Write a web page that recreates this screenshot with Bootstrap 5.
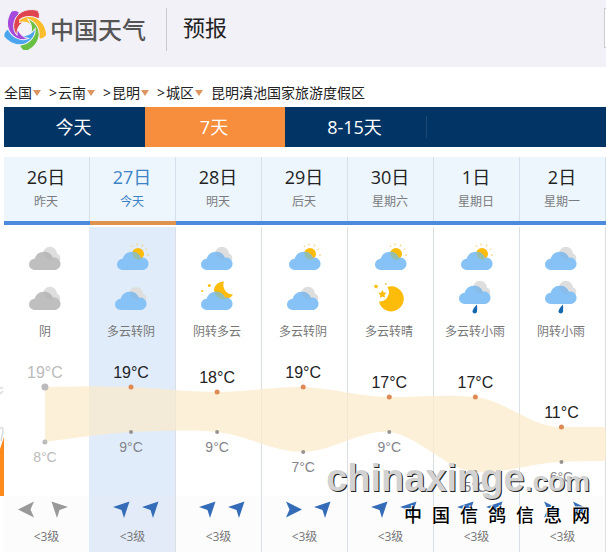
<!DOCTYPE html>
<html lang="zh-CN">
<head>
<meta charset="utf-8">
<meta name="viewport" content="width=device-width, initial-scale=1">
<title>预报 - 中国天气</title>
<link href="https://cdn.jsdelivr.net/npm/bootstrap@5.3.0/dist/css/bootstrap.min.css" rel="stylesheet">
<style>
body{font-family:"Open Sans","Noto Sans CJK SC",sans-serif;color:#222;background:#fff;overflow-x:hidden}
a{color:inherit;text-decoration:none}
.site-head{height:67px;background:#f2f1f8;padding:8px 0 0 4px}
.brand-name{font-size:24px;line-height:42px;font-weight:500;color:#555;font-family:"Noto Sans CJK SC",sans-serif;padding-right:4px}
.head-rule{width:1px;height:43px;background:#c9c9cf}
.head-title{font-size:22px;line-height:38px}
.search-edge{width:2px;height:40px;border:1px solid #ccc;border-right:0;background:#fff}
.crumbs{font-size:14px;line-height:20px;padding:16px 0 4px 4px}
.crumbs .tri{width:0;height:0;border:4px solid transparent;border-top:6px solid #dd9560;border-bottom:0;margin-left:1px}
.crumbs .sep{margin-left:8px;width:9px}
.tabs-bar{background:#023466;margin-left:4px;height:40px;color:#fff;font-size:18px;line-height:40px}
.tabs-bar a{width:141px;text-align:center;padding-right:2px}
.tabs-bar .on{background:#f68e3d;width:140px}
.tab-rule{width:1px;height:22px;background:#1d4874}
.days{margin:10px 0 2px 4px}
.day{--bar:#4b8adc;flex:1 1 0;min-width:0;background:linear-gradient(var(--bar),var(--bar)) bottom/100% 4px no-repeat,linear-gradient(#d5e0ec,#d5e0ec) right/1px 100% no-repeat #edf6fd;height:68px;padding:8px 2px 0 0;text-align:center}
.day strong{font-size:18px;line-height:24px;font-weight:400;display:block}
.day small{font-size:12px;line-height:26px;color:#7c7c80;display:block}
.day.now,.day.now small{color:#3f83c6}
.day.now{--bar:#e0924f}
.cols{margin-left:4px}
.col-day{flex:1 1 0;min-width:0;border-right:1px solid #dadfe6;text-align:center;font-size:12px;line-height:24px;color:#777}
.col-day.first{border-right-color:#e0ecfa}
.col-day.now{background:#e0ecfa}
.sky{padding:12px 3px 0 0}
.sky svg{width:40px;height:40px;display:block;margin:0 auto}
.sky span{display:block;line-height:26px;height:24px}
.chart-room{height:153px}
.wind{height:56px;background:#fcfcfc;padding:5px 0 0}
.now .wind{background:#e2ebf7}
.arrows{height:18px;gap:12px;padding-left:6px}
.first .arrows{gap:16px;padding-left:8px}
.arrows svg{width:17px;height:17px;fill:#356cb8}
.first .arrows svg{fill:#999}
.force{padding:6px 0 0}
.chart{position:absolute;left:0;top:116px;width:100%;height:153px;font-family:"Liberation Sans",sans-serif}
.hi{font-size:16px;fill:#222;text-anchor:middle}
.lo{font-size:14px;fill:#84848a;text-anchor:middle}
.hi .old,.lo .old{fill:#bbb}
.side-ad{position:absolute;left:0;top:385px;width:4px;height:111px}
.stamp{position:absolute;right:16px;top:458px;font-family:"Liberation Sans","Noto Sans CJK SC",sans-serif;font-weight:700;color:#d2d2d2;text-shadow:1px 1px 0 #222}
.stamp-url{font-size:38px;line-height:40px}
.stamp-url span{font-size:28px}
.stamp-cn{font-size:18px;line-height:22px;gap:10px;margin-top:3px;color:#000;font-weight:500;text-shadow:-1px -1px 0 #fff}
</style>
<script src="https://cdn.jsdelivr.net/npm/bootstrap@5.3.0/dist/js/bootstrap.bundle.min.js"></script>
</head>
<body class="position-relative">
<svg class="d-none" aria-hidden="true">
  <symbol id="front" viewBox="0 0 32 22"><path d="M5.600 22A5.600 5.600 0 0 1 5.600 10.800A9.800 9.800 0 0 1 24 9.700A6.200 6.200 0 1 1 26.500 22Z"/></symbol>
  <symbol id="overcast" viewBox="0 0 40 40"><path d="M18 15A6.800 6.800 0 0 1 32 14.500A5 5 0 0 1 35 21L24 24Z" fill="#dedede"/><use href="#front" x="4" y="9" width="32" height="22"/><path d="M18.500 12.500A9.500 9.500 0 0 1 27.300 18.500A6 6 0 0 1 29 18.600L26 21Q19 19 18.500 12.500Z" fill="#999" opacity=".15"/></symbol>
  <symbol id="sunny" viewBox="0 0 40 40"><circle cx="27" cy="15" r="6" fill="#fdbb0a"/><path d="M21 6.500l1 1.500M26 4.500v2M32 5.500l-1 2M36 9.500l-1.500 1.500M38 16H36" stroke="#f5ce6a" stroke-width="1"/><use href="#front" x="6" y="9" width="32" height="22"/><path d="M22 12.400A9.500 9.500 0 0 1 29.500 18.800A6 6 0 0 1 31 19.300A6 6 0 0 1 21.500 14Z" fill="#a6ba62" opacity=".5"/></symbol>
  <symbol id="mooncloud" viewBox="0 0 40 40"><path d="M27 2.500A9.700 9.700 0 0 0 16.700 12L28 19.500Q33 20.500 36 15.500A9.500 9.500 0 0 1 27 2.500Z" fill="#fdbb0a"/><circle cx="12.300" cy="6.500" r="1.500" fill="#fdbb0a"/><circle cx="5.200" cy="12" r="1" fill="#fdbb0a"/><use href="#front" x="4" y="9" width="32" height="22"/><path d="M17.500 12A9.500 9.500 0 0 1 27 18.500L31 19A9 9 0 0 1 17.500 12Z" fill="#a6ba62" opacity=".5"/></symbol>
  <symbol id="moon" viewBox="0 0 40 40"><path d="M18.300 8A12.500 12.500 0 1 1 10 22.500A9.300 9.300 0 0 0 18.300 8Z" fill="#fdbb0a"/><path d="M13.500 11l1.200 2.500 2.800.2-2 2.200.6 2.800-2.600-1.200-2.600 1.200.4-2.800-2-2 2.800-.4Z" fill="#fdbb0a"/><path d="M7 5l.8 1.500 1.600.2-1.100 1.200.3 1.600L7 8.800l-1.500.7.3-1.600-1.200-1.200 1.600-.2Z" fill="#fdbb0a"/><circle cx="16.800" cy="5" r="1" fill="#f2ca60"/></symbol>
  <symbol id="rain" viewBox="0 0 40 40"><use href="#overcast" y="-6" width="40" height="40"/><path d="M22 25.500Q17.500 30 17.500 32.800A2.300 2.300 0 0 0 22 32.800Q22.400 29 22 25.500Z" fill="#1468ae"/></symbol>
  <symbol id="w" viewBox="0 0 17 17"><path d="M0 8.500L16 0.500L12.500 8.500L16 16.500Z"/></symbol>
  <symbol id="ne" viewBox="0 0 17 17"><path d="M0 6L16.500 .5L11 17L8.500 9Z"/></symbol>
  <symbol id="nw" viewBox="0 0 17 17"><path d="M.5 .5L17 6L8.500 9L6 17Z"/></symbol>
  <symbol id="e" viewBox="0 0 17 17"><path d="M1 .5L17 8.500L1 16.500L4.500 8.500Z"/></symbol>
</svg>

<header class="site-head d-flex align-items-start">
  <a href="#" class="d-flex" aria-label="中国天气">
    <svg width="42" height="42" viewBox="-63 -63 126 126">
      <defs>
        <path id="blade" d="M43-32Q46-46 38-56C2-65-30-48-34-14C-35-2-32 10-24 19C-26-12-4-34 43-32Z"/>
        <clipPath id="tail"><path d="M-60-44H-18V30H-60Z"/></clipPath>
      </defs>
      <g stroke="#f2f1f8" stroke-width="3">
        <use href="#blade" fill="#e0444e"/>
        <use href="#blade" fill="#fbbd2c" transform="rotate(72)"/>
        <use href="#blade" fill="#69c043" transform="rotate(144)"/>
        <use href="#blade" fill="#4aa5ee" transform="rotate(216)"/>
        <use href="#blade" fill="#a548dc" transform="rotate(288)"/>
        <g clip-path="url(#tail)"><use href="#blade" fill="#e0444e"/></g>
      </g>
    </svg>
    <span class="brand-name ms-1">中国天气</span>
  </a>
  <div class="head-rule ms-3 me-3"></div>
  <h1 class="head-title m-0 fw-normal">预报</h1>
  <div class="search-edge ms-auto"></div>
</header>

<nav class="crumbs d-flex align-items-center" aria-label="位置">
  <a href="#">全国</a><span class="tri"></span><span class="sep">&gt;</span>
  <a href="#">云南</a><span class="tri"></span><span class="sep">&gt;</span>
  <a href="#">昆明</a><span class="tri"></span><span class="sep">&gt;</span>
  <a href="#">城区</a><span class="tri"></span><span class="ms-2">昆明滇池国家旅游度假区</span>
</nav>

<nav class="tabs-bar d-flex align-items-center" aria-label="预报天数">
  <a href="#">今天</a><a href="#" class="on" aria-current="page">7天</a><a href="#">8-15天</a><span class="tab-rule"></span>
</nav>

<main>
  <div class="days d-flex">
    <div class="day"><strong>26日</strong><small>昨天</small></div>
    <div class="day now"><strong>27日</strong><small>今天</small></div>
    <div class="day"><strong>28日</strong><small>明天</small></div>
    <div class="day"><strong>29日</strong><small>后天</small></div>
    <div class="day"><strong>30日</strong><small>星期六</small></div>
    <div class="day"><strong>1日</strong><small>星期日</small></div>
    <div class="day"><strong>2日</strong><small>星期一</small></div>
  </div>
  <div class="cols d-flex position-relative">
    <div class="col-day first">
      <div class="sky"><svg fill="#bfbfbf"><use href="#overcast"/></svg><svg fill="#bfbfbf"><use href="#overcast"/></svg><span>阴</span></div>
      <div class="chart-room"></div>
      <div class="wind"><div class="arrows d-flex justify-content-center pe-3"><svg><use href="#w"/></svg><svg><use href="#nw"/></svg></div><div class="force">&lt;3级</div></div>
    </div>
    <div class="col-day now">
      <div class="sky"><svg fill="#86c2f6"><use href="#sunny"/></svg><svg fill="#86c2f6"><use href="#overcast"/></svg><span>多云转阴</span></div>
      <div class="chart-room"></div>
      <div class="wind"><div class="arrows d-flex justify-content-center"><svg><use href="#ne"/></svg><svg><use href="#ne"/></svg></div><div class="force">&lt;3级</div></div>
    </div>
    <div class="col-day">
      <div class="sky"><svg fill="#86c2f6"><use href="#overcast"/></svg><svg fill="#86c2f6"><use href="#mooncloud"/></svg><span>阴转多云</span></div>
      <div class="chart-room"></div>
      <div class="wind"><div class="arrows d-flex justify-content-center"><svg><use href="#ne"/></svg><svg><use href="#ne"/></svg></div><div class="force">&lt;3级</div></div>
    </div>
    <div class="col-day">
      <div class="sky"><svg fill="#86c2f6"><use href="#sunny"/></svg><svg fill="#86c2f6"><use href="#overcast"/></svg><span>多云转阴</span></div>
      <div class="chart-room"></div>
      <div class="wind"><div class="arrows d-flex justify-content-center"><svg><use href="#e"/></svg><svg><use href="#ne"/></svg></div><div class="force">&lt;3级</div></div>
    </div>
    <div class="col-day">
      <div class="sky"><svg fill="#86c2f6"><use href="#sunny"/></svg><svg><use href="#moon"/></svg><span>多云转晴</span></div>
      <div class="chart-room"></div>
      <div class="wind"><div class="arrows d-flex justify-content-center"><svg><use href="#ne"/></svg><svg><use href="#ne"/></svg></div><div class="force">&lt;3级</div></div>
    </div>
    <div class="col-day">
      <div class="sky"><svg fill="#86c2f6"><use href="#sunny"/></svg><svg fill="#86c2f6"><use href="#rain"/></svg><span>多云转小雨</span></div>
      <div class="chart-room"></div>
      <div class="wind"><div class="arrows d-flex justify-content-center"><svg><use href="#ne"/></svg><svg><use href="#ne"/></svg></div><div class="force">&lt;3级</div></div>
    </div>
    <div class="col-day">
      <div class="sky"><svg fill="#86c2f6"><use href="#overcast"/></svg><svg fill="#86c2f6"><use href="#rain"/></svg><span>阴转小雨</span></div>
      <div class="chart-room"></div>
      <div class="wind"><div class="arrows d-flex justify-content-center"><svg><use href="#e"/></svg><svg><use href="#e"/></svg></div><div class="force">&lt;3级</div></div>
    </div>

    <svg class="chart" role="img" aria-label="七天气温">
      <svg width="100%" height="153" viewBox="0 0 602 153" preserveAspectRatio="none">
        <path fill="#fceac9" fill-opacity=".7" d="M41 44C70 43 98 43 127 44C156 45 184 49 213 49C242 49 270 43 299 44C328 45 356 54 385 54C414 54 442 51 471 54C500 57 528 84 557 84L602 84V118C587 118 572 118 557 119C528 120 500 131 471 129C442 127 414 92 385 89C356 87 328 109 299 109C270 109 242 92 213 89C184 86 156 88 127 89C98 91 70 95 41 99Z"/>
      </svg>
      <g fill="#dd8a55"><circle cx="21.100%" cy="44" r="2.500"/><circle cx="35.400%" cy="49" r="2.500"/><circle cx="49.700%" cy="44" r="2.500"/><circle cx="64%" cy="54" r="2.500"/><circle cx="78.300%" cy="54" r="2.500"/><circle cx="92.600%" cy="84" r="2.500"/></g>
      <g fill="#bbb"><circle cx="6.800%" cy="44" r="3.500"/><circle cx="6.800%" cy="99" r="2.500"/></g>
      <g fill="#96948f"><circle cx="21.100%" cy="89" r="2"/><circle cx="35.400%" cy="89" r="2"/><circle cx="49.700%" cy="109" r="2"/><circle cx="64%" cy="89" r="2"/><circle cx="78.300%" cy="129" r="2"/><circle cx="92.600%" cy="119" r="2"/></g>
      <g class="hi"><text x="6.800%" y="35" class="old">19°C</text><text x="21.100%" y="35">19°C</text><text x="35.400%" y="40">18°C</text><text x="49.700%" y="35">19°C</text><text x="64%" y="45">17°C</text><text x="78.300%" y="45">17°C</text><text x="92.600%" y="75">11°C</text></g>
      <g class="lo"><text x="6.800%" y="119" class="old">8°C</text><text x="21.100%" y="109">9°C</text><text x="35.400%" y="109">9°C</text><text x="49.700%" y="129">7°C</text><text x="64%" y="109">9°C</text><text x="78.300%" y="149">5°C</text><text x="92.600%" y="139">6°C</text></g>
    </svg>
  </div>
</main>

<svg class="side-ad" viewBox="0 0 4 111" aria-hidden="true"><path d="M0 3H3M0 9L3 6M0 44Q3 40 3 46L1 56" fill="none" stroke="#d8dade" stroke-width="1.500"/><path d="M0 64L4 52V111H0Z" fill="#ff8a1c"/></svg>

<div class="stamp">
  <div class="stamp-url">chinaxinge<span>.com</span></div>
  <div class="stamp-cn d-flex justify-content-end"><span>中</span><span>国</span><span>信</span><span>鸽</span><span>信</span><span>息</span><span>网</span></div>
</div>
</body>
</html>
